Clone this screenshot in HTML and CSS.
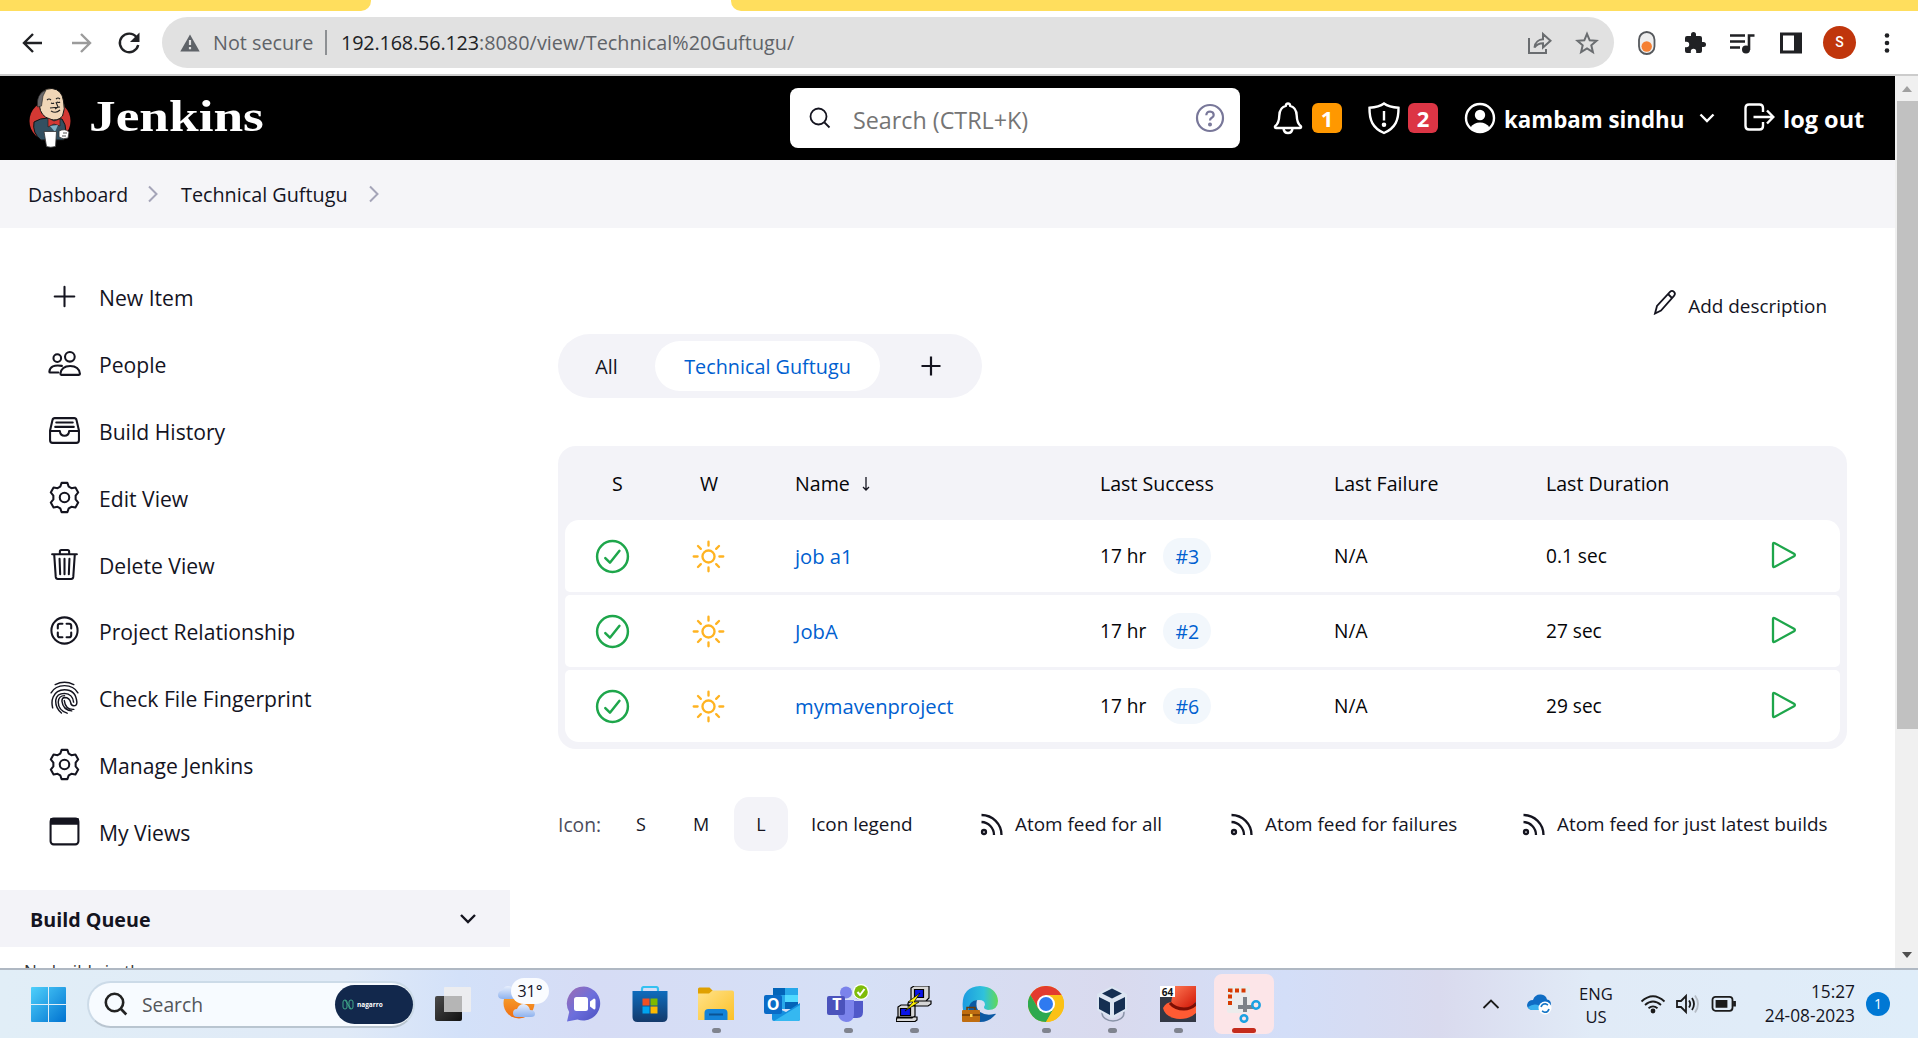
FILE: index.html
```html
<!DOCTYPE html>
<html lang="en">
<head>
<meta charset="utf-8">
<title>Technical Guftugu [Jenkins]</title>
<link rel="stylesheet" href="styles.css">
</head>
<body>
<svg width="0" height="0" class="defs">
  <defs>
    <linearGradient id="win" x1="0" y1="0" x2="1" y2="1"><stop offset="0" stop-color="#4fd0fb"/><stop offset="1" stop-color="#0072d0"/></linearGradient>
    <linearGradient id="chat" x1="0" y1="0" x2="1" y2="1"><stop offset="0" stop-color="#a06cb0"/><stop offset=".5" stop-color="#6c6fdc"/><stop offset="1" stop-color="#4b50c0"/></linearGradient>
    <linearGradient id="store" x1="0" y1="0" x2="0" y2="1"><stop offset="0" stop-color="#0f6cbd"/><stop offset="1" stop-color="#143a6b"/></linearGradient>
    <linearGradient id="folder" x1="0" y1="0" x2="1" y2="1"><stop offset="0" stop-color="#ffe28a"/><stop offset="1" stop-color="#fcc127"/></linearGradient>
    <linearGradient id="sunny" x1="0" y1="0" x2="0" y2="1"><stop offset="0" stop-color="#fbb233"/><stop offset="1" stop-color="#ee6c12"/></linearGradient>
    <linearGradient id="cloud" x1="0" y1="0" x2="0" y2="1"><stop offset="0" stop-color="#e8effc"/><stop offset="1" stop-color="#8eb2ee"/></linearGradient>
    <linearGradient id="edgeTop" x1="0" y1="0" x2="1" y2="0"><stop offset="0" stop-color="#1c9be0"/><stop offset=".6" stop-color="#2fc2dc"/><stop offset="1" stop-color="#62d957"/></linearGradient>
    <linearGradient id="dark" x1="0" y1="0" x2="1" y2="1"><stop offset="0" stop-color="#4a4a4a"/><stop offset="1" stop-color="#111"/></linearGradient>
    <linearGradient id="hat" x1="0" y1="0" x2="1" y2="1"><stop offset="0" stop-color="#ff7a55"/><stop offset="1" stop-color="#d01505"/></linearGradient>
    <symbol id="gear" viewBox="0 0 32 32"><path d="M13.2 1.8h5.6l1.3 3.7 2.6 1.5 3.9-.7 2.7 4.8-2.5 3v3.8l2.5 3-2.7 4.8-3.9-.7-2.6 1.5-1.3 3.7h-5.6l-1.3-3.7L9.300 25l-3.900.7-2.700-4.800 2.500-3v-3.800l-2.500-3 2.700-4.800 3.900.7 2.600-1.500z"/><circle cx="16" cy="16" r="4.600"/></symbol>
    <symbol id="rss" viewBox="0 0 24 24"><circle cx="4" cy="19.500" r="2"/><path d="M1.500 9.500a13 13 0 0 1 12.500 13M1.500 2.500a20 20 0 0 1 20 20"/></symbol>
    <symbol id="ok" viewBox="0 0 36 36"><circle cx="18" cy="18" r="15"/><path d="M11 19.500l4.500 4.500L24.800 12.500"/></symbol>
    <symbol id="sun" viewBox="0 0 36 36"><circle cx="18" cy="18" r="6.200"/><path d="M18 2.800v4M18 29.200v4M2.800 18h4M29.200 18h4M7.200 7.200l2.900 2.900M25.900 25.900l2.900 2.900M7.200 28.800l2.900-2.900M25.900 10.100l2.900-2.900"/></symbol>
    <symbol id="play" viewBox="0 0 28 30"><path d="M3 4.200v21.600q0 2 1.800 1L24 16.300q1.800-1.300 0-2.600L4.800 3.200Q3 2.200 3 4.200z"/></symbol>
  </defs>
</svg>

<div class="tabstrip"><div class="tab-left"></div><div class="tab-right"></div></div>

<div class="toolbar">
  <div class="nav">
    <svg width="24" height="24" viewBox="0 0 24 24"><path d="M21 12H3.500M12 3L3 12l9 9"/></svg>
    <svg class="off" width="24" height="24" viewBox="0 0 24 24"><path d="M3 12h17.500M12 3l9 9-9 9"/></svg>
    <svg width="24" height="24" viewBox="0 0 24 24"><path d="M19.500 6.200A9.300 9.300 0 1 0 21.200 14"/><path class="fill" d="M22.500 1.500v9.500H13z"/></svg>
  </div>
  <div class="omnibox">
    <svg width="20" height="18" viewBox="0 0 20 18"><path d="M10 0.500L19.700 17.500H.3z" fill="#5f6368"/><path d="M10 6v5M10 13v2.200" stroke="#e1e1e1" stroke-width="2.200"/></svg>
    <span class="notsecure">Not secure</span><i class="sep"></i>
    <span class="url"><b>192.168.56.123</b>:8080/view/Technical%20Guftugu/</span>
    <span class="omni-icons">
      <svg width="26" height="24" viewBox="0 0 26 24"><path d="M2 7v15h17v-4M7.500 16.500C8 11 12 8.500 16 8.300V3l7.500 6.700L16 16.500v-4.300c-4 0-6.500 1.300-8.500 4.300z"/></svg>
      <svg width="24" height="24" viewBox="0 0 24 24"><path d="M12 2.800l2.700 6.500 6.800.5-5.200 4.500 1.600 6.800-5.900-3.700-5.900 3.700 1.600-6.800-5.200-4.500 6.800-.5z"/></svg>
    </span>
  </div>
  <div class="extensions">
    <svg width="20" height="26" viewBox="0 0 20 26"><rect x="2" y="2" width="15.500" height="22" rx="7.700" fill="#eee" stroke="#55585c" stroke-width="1.800"/><circle cx="9.700" cy="16.500" r="5.200" fill="#f58033"/></svg>
    <svg width="24" height="24" viewBox="0 0 24 24"><path fill="#202124" d="M20.500 11H19V7a2 2 0 0 0-2-2h-4V3.500a2.500 2.500 0 0 0-5 0V5H4a2 2 0 0 0-2 2v3.800h1.500a2.700 2.700 0 0 1 0 5.400H2V20a2 2 0 0 0 2 2h3.800v-1.500a2.700 2.700 0 0 1 5.400 0V22H17a2 2 0 0 0 2-2v-4h1.500a2.500 2.500 0 0 0 0-5z"/></svg>
    <svg width="26" height="24" viewBox="0 0 26 24"><path fill="none" stroke="#202124" stroke-width="2.600" d="M1 4.500h15M1 10.500h15M1 16.500h10M20 19V4.500h5.500"/><circle cx="17" cy="18.500" r="4" fill="#202124"/></svg>
    <svg width="24" height="24" viewBox="0 0 24 24"><path fill="#202124" fill-rule="evenodd" d="M1 1.500h22v21H1zM4 4.500v15h11v-15z"/></svg>
    <span class="avatar">S</span>
    <svg width="6" height="24" viewBox="0 0 6 24"><g fill="#202124"><circle cx="3" cy="4.500" r="2.300"/><circle cx="3" cy="12" r="2.300"/><circle cx="3" cy="19.500" r="2.300"/></g></svg>
  </div>
</div>

<div class="viewport">
<div class="page">
  <header class="header">
    <svg class="butler" width="44" height="62" viewBox="0 0 44 62">
      <ellipse cx="22" cy="34" rx="20.500" ry="20" fill="#d33833"/>
      <path d="M6 35q6-4 14-4l14 1q4 5 4 13l-2 8H13Q4 46 6 35z" fill="#335061" stroke="#111" stroke-width="1"/>
      <path d="M10 15Q12 1 24 1.500q10 1 11.500 12.500 2 8-1 15-5 6-13 3-9-3-10-13z" fill="#f0d6b7" stroke="#111" stroke-width="1"/>
      <path d="M9.500 20Q8 7 18 3l-3 6-1.500 10z" fill="#6d6b6d" stroke="#222" stroke-width=".6"/>
      <path d="M19 13q2-2 4 0M28 12q2-2 4 0M23 16q2 1 3 0M29 15q2 1 3 0M28 15l2 5-3 2M23 24q5 3 9-1M22 21l10-1" fill="none" stroke="#222" stroke-width="1.100"/>
      <path d="M20 31l6 3 6-2v7l-6-2-6 3z" fill="#d33833" stroke="#222" stroke-width=".7"/>
      <path d="M22 39l8-1-3 7z" fill="#81b0c4"/>
      <path d="M16 44.500h12.500l-1 15q-5 1.500-9 0z" fill="#fff" stroke="#333" stroke-width=".8"/>
      <path d="M31 44q6-3 10 1l-1 6q-5 2-9-1z" fill="#fff" stroke="#333" stroke-width=".8"/><path d="M35 46h4M34 49h4" stroke="#555"/>
    </svg>
    <span class="wordmark">Jenkins</span>
    <div class="search">
      <svg width="24" height="24" viewBox="0 0 24 24"><circle cx="10.500" cy="10.500" r="8"/><path d="M16.500 16.500l5 5"/></svg>
      <span>Search (CTRL+K)</span>
      <svg class="help" width="30" height="30" viewBox="0 0 30 30"><circle cx="15" cy="15" r="13"/><path d="M11.300 12.200q.2-3.700 3.800-3.700 3.600.2 3.600 3.400 0 1.800-1.900 2.800-1.800.9-1.800 2.900"/><circle cx="15" cy="21.500" r=".9"/></svg>
    </div>
    <div class="account">
      <svg width="30" height="34" viewBox="0 0 30 34"><path d="M15 2.500c1.500 0 2 1 2.200 2.300 4.500 1.200 6.300 4.700 6.500 9.700.2 6 1.300 8.500 4 10.500.8 1 .3 2-1 2H3.300c-1.300 0-1.800-1-1-2 2.700-2 3.800-4.500 4-10.500.2-5 2-8.500 6.500-9.700C13 3.500 13.500 2.500 15 2.500zM10.500 27.500q.5 4.500 4.500 4.500t4.500-4.500"/></svg>
      <b class="badge orange">1</b>
      <svg class="shield" width="34" height="34" viewBox="0 0 34 34"><path d="M17 2.500C13 5.500 7 6.500 2.500 6.800 2.300 19 5.500 27 17 32 28.500 27 31.700 19 31.500 6.800 27 6.500 21 5.500 17 2.500zM17 10v9.500"/><circle cx="17" cy="23.700" r="1.100"/></svg>
      <b class="badge red">2</b>
      <svg class="user" width="32" height="32" viewBox="0 0 32 32"><circle cx="16" cy="16" r="14"/><g fill="#fff" stroke="none"><circle cx="16" cy="13" r="5.200"/><path d="M6.500 25.500Q10 20.500 16 20.500t9.500 5Q21.500 30 16 30T6.500 25.500z"/></g></svg>
      <span class="who">kambam sindhu</span>
      <svg class="chev" width="16" height="12" viewBox="0 0 16 12"><path d="M1.500 2.500L8 9l6.500-6.500"/></svg>
      <svg class="exit" width="32" height="30" viewBox="0 0 32 30"><path d="M20 10V6q0-3.500-3.500-3.500H6Q2.500 2.500 2.500 6v18q0 3.500 3.500 3.500h10.500q3.500 0 3.500-3.500v-4M10.500 15H30M24 8.500l6.300 6.500-6.300 6.500"/></svg>
      <span class="out">log out</span>
    </div>
  </header>

  <nav class="crumbs">
    <span class="c1">Dashboard</span>
    <svg width="12" height="18" viewBox="0 0 12 18"><path d="M2 1.500L9.500 9 2 16.500"/></svg>
    <span class="c2">Technical Guftugu</span>
    <svg width="12" height="18" viewBox="0 0 12 18"><path d="M2 1.500L9.500 9 2 16.500"/></svg>
  </nav>

  <div class="columns">
    <aside class="side">
      <ul class="tasks">
        <li><svg viewBox="0 0 32 32"><path d="M16 6.500v19M6.500 16h19"/></svg><span>New Item</span></li>
        <li><svg viewBox="0 0 32 32"><circle cx="21.200" cy="9.500" r="4.700"/><path d="M12 26q1-7.500 9.500-7.500t9.500 7.500q0 1-1 1H13q-1 0-1-1zM13.500 18.300Q2 16.500 1.300 24q0 .8.800.8H10"/><circle cx="9" cy="10.800" r="3.700"/></svg><span>People</span></li>
        <li><svg viewBox="0 0 32 32"><path d="M6.500 4h19q1.700 0 2.200 2L30 16v9.500Q30 28 27.500 28h-23Q2 28 2 25.500V16L4.300 6q.5-2 2.200-2zM2 16.500h9.500q.5 4.500 4.500 4.500t4.500-4.500H30M8 8.300h16M7 12.500h18"/></svg><span>Build History</span></li>
        <li><svg><use href="#gear"/></svg><span>Edit View</span></li>
        <li><svg viewBox="0 0 32 32"><path d="M4 6h24M6 6l1.500 22q.2 2 2 2h13q1.800 0 2-2L26 6M11.500 6V3.500Q11.500 2 13 2h6q1.500 0 1.500 1.500V6M11.200 10.500l.6 15M16 10.500v15M20.800 10.500l-.6 15"/></svg><span>Delete View</span></li>
        <li><svg viewBox="0 0 32 32"><circle cx="16" cy="16" r="12.700"/><path d="M9.500 14v-2.500q0-2 2-2H14M18 9.500h2.500q2 0 2 2V14M22.500 18v2.500q0 2-2 2H18M14 22.500h-2.500q-2 0-2-2V18"/></svg><span>Project Relationship</span></li>
        <li><svg class="thin" viewBox="0 0 32 32"><path d="M7 3.500Q16-1 25 3.500M3 11.500q4-7 13-7t13 7M4.500 26Q3 20 5 15.500 8 8.500 16 8.500q11 0 12 12 0 3.500-3 3.500-2.700 0-3-3-1-5-6-5-2.500.2-2.500 3.500 1 8.500 9.500 9.500M18.500 31.200Q9.500 28 10 20q.5-5.800 6-5.800M13 31q-6-5-5.500-12.500Q8.500 12 16 12q8 .5 8.800 8.500M25 27.500q-8 .5-9.200-8.500"/></svg><span>Check File Fingerprint</span></li>
        <li><svg><use href="#gear"/></svg><span>Manage Jenkins</span></li>
        <li><svg viewBox="0 0 32 32"><rect x="2.500" y="3.500" width="27" height="25" rx="3"/><path d="M3 4h26v4.500H3z" fill="#14141f"/></svg><span>My Views</span></li>
      </ul>
      <div class="queue"><span>Build Queue</span><svg width="18" height="12" viewBox="0 0 18 12"><path d="M2 2l7 7 7-7"/></svg></div>
      <p class="empty">No builds in the queue.</p>
    </aside>

    <main class="main">
      <div class="describe"><svg width="24" height="26" viewBox="0 0 24 26"><path d="M2 24.500l2-7.500L17 2.800q2-1.800 4 0 1.800 2 0 4L8 21.500zM15 5l4 4"/></svg><span>Add description</span></div>
      <div class="views"><span class="all">All</span><span class="current">Technical Guftugu</span><svg width="20" height="20" viewBox="0 0 20 20"><path d="M10 .5v19M.5 10h19"/></svg></div>

      <section class="jobs">
        <div class="row head"><span class="s">S</span><span class="w">W</span><span>Name <svg width="10" height="16" viewBox="0 0 10 16"><path d="M5 1v13M2 11l3 3 3-3"/></svg></span><span>Last Success</span><span>Last Failure</span><span>Last Duration</span><span></span></div>
        <div class="row"><svg class="ok"><use href="#ok"/></svg><svg class="sun"><use href="#sun"/></svg><a>job a1</a><span class="when">17 hr <a class="build">#3</a></span><span>N/A</span><span>0.1 sec</span><svg class="play"><use href="#play"/></svg></div>
        <div class="row"><svg class="ok"><use href="#ok"/></svg><svg class="sun"><use href="#sun"/></svg><a>JobA</a><span class="when">17 hr <a class="build">#2</a></span><span>N/A</span><span>27 sec</span><svg class="play"><use href="#play"/></svg></div>
        <div class="row"><svg class="ok"><use href="#ok"/></svg><svg class="sun"><use href="#sun"/></svg><a>mymavenproject</a><span class="when">17 hr <a class="build">#6</a></span><span>N/A</span><span>29 sec</span><svg class="play"><use href="#play"/></svg></div>
      </section>

      <footer class="foot">
        <span class="lbl">Icon:</span><span class="sz">S</span><span class="sz">M</span><span class="sz on">L</span><span class="legend">Icon legend</span>
        <span class="feed f1"><svg><use href="#rss"/></svg>Atom feed for all</span>
        <span class="feed f2"><svg><use href="#rss"/></svg>Atom feed for failures</span>
        <span class="feed"><svg><use href="#rss"/></svg>Atom feed for just latest builds</span>
      </footer>
    </main>
  </div>
</div>
<div class="scrollbar"><i class="up"></i><div class="thumb"></div><i class="down"></i></div>
</div>

<div class="taskbar">
  <svg class="start" width="35" height="35" viewBox="0 0 35 35"><path fill="url(#win)" d="M1 0h16v17H0V1q0-1 1-1zM18 0h16q1 0 1 1v16H18zM0 18h17v17H1q-1 0-1-1zM18 18h17v16q0 1-1 1H18z"/></svg>
  <div class="tsearch">
    <svg width="24" height="24" viewBox="0 0 24 24"><circle cx="10.500" cy="10.500" r="8.700"/><path d="M16.500 16.500l5.800 6"/></svg>
    <span>Search</span>
    <div class="promo"><svg width="12" height="11" viewBox="0 0 12 11"><path d="M1 8V3q0-2 2-2t2 2v5q0 2-2 2T1 8zM7 8V3q0-2 2-2t2 2v5q0 2-2 2T7 8zM3 1l6 9"/></svg>nagarro</div>
  </div>
  <div class="apps">
    <div class="app"><svg width="38" height="38" viewBox="0 0 38 38"><rect x="2" y="11" width="27" height="25" rx="2" fill="url(#dark)"/><rect x="11" y="2" width="27" height="25" rx="1" fill="#eee" opacity=".9"/><rect x="11" y="11" width="18" height="16" fill="#b5b5b5"/></svg></div>
    <div class="app weather"><svg width="44" height="40" viewBox="0 0 44 40"><circle cx="21" cy="21" r="15.500" fill="url(#sunny)"/><path d="M5 17q-5 0-5-4t5-5q1-4 5-4t6 5q4 0 4 4 0 5-4 4z" fill="url(#cloud)"/><path d="M19 35q-4 0-4-4t4-4q2-5 7-5 5 1 6 6 5 0 5 4 0 3-4 3z" fill="url(#cloud)"/></svg><span>31°</span></div>
    <div class="app"><svg width="36" height="36" viewBox="0 0 36 36"><path d="M18 0.500a17 17 0 1 1-6.500 33L1 35.500 3.200 26A17 17 0 0 1 18 .5z" fill="url(#chat)"/><rect x="8" y="11" width="14" height="14" rx="2.500" fill="#fff"/><path d="M24 15.500l4-3q1.500 0 1.500 1.500v8q0 1.500-1.500 1.500l-4-3z" fill="#fff"/></svg></div>
    <div class="app"><svg width="36" height="36" viewBox="0 0 36 36"><path d="M10 6V3q0-2 2-2h12q2 0 2 2v3" fill="none" stroke="#35c1f1" stroke-width="2.200"/><path d="M.5 5h35v26q0 5-5 5h-25q-5 0-5-5z" fill="url(#store)"/><path fill="#f25022" d="M10.500 12.500h7v7h-7z"/><path fill="#7fba00" d="M18.500 12.500h7v7h-7z"/><path fill="#00a4ef" d="M10.500 20.500h7v7h-7z"/><path fill="#ffb900" d="M18.500 20.500h7v7h-7z"/></svg></div>
    <div class="app run"><svg width="36" height="34" viewBox="0 0 36 34"><path d="M0 2q0-1.500 1.500-1.500h10L15 4l-3 3H0z" fill="#dfa000"/><path d="M0 6.500h11l3.500-3H34q2 0 2 2V33H0z" fill="url(#folder)"/><path d="M6.500 33v-7q0-4 4-4h15q4 0 4 4v7z" fill="#1483d8"/><path d="M11 27.500h14" stroke="#0b5394" stroke-width="2"/></svg></div>
    <div class="app"><svg width="36" height="34" viewBox="0 0 36 34"><path fill="#28a8ea" d="M9 1h25v21H9z"/><path fill="#50d9ff" d="M21 8h13v7H21z"/><path fill="#0364b8" d="M9 1h12v7H9zM21 15h13v7H21z"/><path fill="#1490df" d="M8 19l14 6 14-9v16q0 2-2 2H10q-2 0-2-2z"/><path fill="#35b8f1" d="M10 34l26-16v14q0 2-2 2z"/><rect y="8" width="18" height="19" rx="2" fill="#0a6bc7"/></svg><b class="letter">O</b></div>
    <div class="app run"><svg width="44" height="40" viewBox="0 0 44 40"><circle cx="20" cy="8.500" r="6" fill="#7b83eb"/><circle cx="33" cy="11" r="4.500" fill="#5059c9"/><path fill="#5059c9" d="M26 17h11v11q0 6-6 6h-5z"/><path fill="#7b83eb" d="M12 16h16v13q0 9-8 9-8-1-8-9z"/><rect x="1" y="12" width="18" height="19" rx="2" fill="#4b53bc"/><circle cx="35" cy="8" r="8" fill="#fff"/><circle cx="35" cy="8" r="6.800" fill="#7ebc0a"/><path d="M31.500 8l2.500 3 4.500-6" fill="none" stroke="#fff" stroke-width="2"/></svg><b class="letter">T</b></div>
    <div class="app run"><svg width="36" height="36" viewBox="0 0 36 36"><g stroke="#000" stroke-width="1.200" fill="#d6d6d6"><path d="M15 2l3-2h15v12l-3 3H15zM15 15h20v3l-3 2H12v-3zM2 21l3-2h14v11l-3 2H2zM1 31h20v3l-2 1.500H0z"/><path fill="#0a14e8" d="M18.500 3.500h9v8h-9zM4.500 22.500h10v7h-10z"/><path fill="#fff200" d="M24 7L12 16h5l-8 9 14-9h-5z" stroke-width=".7"/></g></svg></div>
    <div class="app"><svg width="36" height="36" viewBox="0 0 36 36"><path d="M1 24Q-2 1 18 0q17 1 18 15 0 9-10 9-6-1-3-5 0-5-6-5Q8 14 8 30 3 28 1 24z" fill="url(#edgeTop)"/><path d="M7 28Q5 15 15 14q-2 8 3 12 6 4 14 2 3-1 1 1-6 7-15 7Q9 35 7 28z" fill="#0c59a4"/><rect y="24" width="18" height="12" rx="1" fill="#c06d10"/><path d="M5 24v-2.500h8V24M0 29h18" fill="none" stroke="#6e3a06" stroke-width="1.500"/><rect x="8" y="28" width="2.500" height="3" fill="#ffd24a"/></svg></div>
    <div class="app run"><svg width="36" height="36" viewBox="0 0 36 36"><circle cx="18" cy="18" r="18" fill="#fbc116"/><path d="M2.400 9A18 18 0 0 1 33.600 9H18L10.200 22.500z" fill="#e33b2e"/><path d="M2.400 9A18 18 0 0 0 18 36l7.800-13.500H10.200z" fill="#2da94f"/><path d="M18 9h15.600A18 18 0 0 1 18 36l7.800-13.500z" fill="#fbc116"/><circle cx="18" cy="18" r="9" fill="#fff"/><circle cx="18" cy="18" r="7" fill="#2f7af0"/></svg></div>
    <div class="app run"><svg width="32" height="36" viewBox="0 0 32 36"><ellipse cx="17" cy="27" rx="11" ry="8" fill="none" stroke="#8a94a8" stroke-width="1.500"/><path fill="#dce5f2" d="M1 8L16 0l15 8v16L16 33 1 24z"/><path fill="#152f52" d="M6 7.500L16 2.500l10 5-10 5zM3 11l11 5.500V29L3 23zM29 11l-11 5.500V29l11-6z"/></svg></div>
    <div class="app run"><svg width="36" height="36" viewBox="0 0 36 36"><path fill="#333845" d="M0 0h36v36H0z"/><path fill="url(#hat)" d="M14 0h22v16q-5 6-12 6-9 0-13-5z"/><path fill="#ff5b33" d="M3 22q3-6 9-6 4 6 12 6 7 0 12-4v9q-6 6-16 6Q5 32 3 22z"/><path d="M10 17q5 6 14 6 7 0 12-5" fill="none" stroke="#7d0e04" stroke-width="3"/><path fill="#fff" d="M0 0h15v11H0z"/></svg><b class="letter bit">64</b></div>
    <div class="app snip"><svg width="36" height="38" viewBox="0 0 36 38"><rect x="1" y="1" width="23" height="27" rx="2" fill="#ececec"/><path d="M4 20V5.500h16" fill="none" stroke="#d83b01" stroke-width="4" stroke-dasharray="4 2.500"/><path d="M19 12v15M12 22h15" stroke="#7d8288" stroke-width="4"/><circle cx="30" cy="20" r="3.700" fill="none" stroke="#1ba1e2" stroke-width="2.500"/><circle cx="18" cy="33.500" r="3.300" fill="none" stroke="#1ba1e2" stroke-width="2.500"/></svg></div>
  </div>
  <div class="tray">
    <svg class="caret" width="18" height="12" viewBox="0 0 18 12"><path d="M1.500 10L9 2.500 16.500 10"/></svg>
    <svg class="drive" width="26" height="22" viewBox="0 0 26 22"><path d="M5 17q-5-1-5-5 1-5 6-5 2-6 8-5.500 5 .5 6 5 4 .5 4 5t-5 5.500z" fill="#0f6cc4"/><path d="M1 14q8-6 16 2v1H5q-3 0-4-3z" fill="#38b0ee"/><circle cx="18" cy="15" r="6.500" fill="#fff"/><path d="M14 14q1-3.500 4.500-3.300l2.500 1.300M22 16q-1 3.500-4.500 3.300L15 18" fill="none" stroke="#1878c8" stroke-width="1.600"/></svg>
    <div class="lang">ENG<br>US</div>
    <svg class="wifi" width="26" height="20" viewBox="0 0 26 20"><path d="M1.500 7.500q11.500-10.500 23 0M5 11q8-7 16 0M8.500 14.300q4.500-3.800 9 0"/><circle cx="13" cy="17" r="1.500" fill="#1b1b1b"/></svg>
    <svg class="vol" width="26" height="22" viewBox="0 0 26 22"><path d="M2 8h4l5-5v16l-5-5H2zM14 7.500q2.500 3.500 0 7M17 5q4 6 0 12"/><path d="M20 2.500q6 8.500 0 17" stroke="#b5bcc5"/></svg>
    <svg class="bat" width="26" height="18" viewBox="0 0 26 18"><rect x="1.500" y="1.800" width="20" height="14" rx="3"/><path d="M5.500 6h10v5.800h-10zM23 7h1v3.500h-1z" fill="#1b1b1b"/></svg>
    <div class="clock">15:27<br>24-08-2023</div>
    <span class="count">1</span>
  </div>
</div>
</body>
</html>
```
FILE: styles.css
```css
* { box-sizing: border-box; }
body {
  margin: 0; width: 1918px; height: 1038px; overflow: hidden;
  display: flex; flex-direction: column; background: #fff;
  font-family: "Open Sans", "Noto Sans", sans-serif; color: #14141f;
}
svg { display: block; flex: none; fill: none; }
.defs { position: absolute; }

/* browser chrome */
.tabstrip { height: 11px; display: flex; justify-content: space-between; }
.tab-left { width: 371px; background: #ffde5d; border-bottom-right-radius: 10px; }
.tab-right { width: 1187px; background: #ffde5d; border-bottom-left-radius: 10px; }
.toolbar { height: 65px; border-bottom: 2px solid #ccc; display: flex; align-items: center; }
.nav { display: flex; gap: 24px; padding-left: 21px; width: 162px; stroke: #202124; stroke-width: 2.4; }
.nav .off { stroke: #9b9b9b; }
.nav .fill { fill: #202124; stroke: none; }
.omnibox { width: 1452px; height: 51px; border-radius: 26px; background: #e1e1e1; display: flex; align-items: center; padding-left: 18px; font-size: 19.8px; color: #5f6368; }
.notsecure { margin-left: 13px; width: 112px; white-space: nowrap; }
.sep { width: 2px; height: 25px; background: #8d9093; margin-right: 14px; }
.url b { font-weight: 400; color: #202124; letter-spacing: -.15px; }
.url { letter-spacing: .05px; }
.omni-icons { margin-left: auto; display: flex; gap: 22px; padding-right: 15px; stroke: #6a6d70; stroke-width: 2; }
.extensions { display: flex; align-items: center; padding-left: 23px; }
.extensions svg:nth-child(2) { margin-left: 26px; }
.extensions svg:nth-child(3) { margin-left: 22px; }
.extensions svg:nth-child(4) { margin-left: 24px; }
.avatar { width: 33px; height: 33px; border-radius: 50%; background: #c0360c; color: #fff; font: 500 14px/33px Roboto, sans-serif; text-align: center; margin: 0 25px 0 20px; }
.extensions svg:last-child { margin-left: 3px; }

.viewport { height: 892px; display: flex; }
.page { width: 1895px; height: 892px; overflow: hidden; }

/* header */
.header { height: 84px; background: #000; color: #fff; display: flex; align-items: center; padding-left: 28px; }
.wordmark { font: 700 45px/60px "Liberation Serif", serif; margin: -5px 0 0 17px; width: 701px; transform: scaleX(1.185); transform-origin: left; }
.search { width: 450px; height: 60px; border-radius: 8px; background: #fff; display: flex; align-items: center; padding: 0 15px 0 18px; stroke: #14141f; stroke-width: 1.8; }
.search span { font-size: 23.3px; color: #757575; margin: 3px auto 0 21px; }
.search .help { stroke: #787799; stroke-width: 2.2; }
.account { display: flex; align-items: center; stroke: #fff; stroke-width: 2.4; padding-left: 33px; }
.badge { width: 30px; height: 30px; border-radius: 6px; font-size: 22px; line-height: 31px; text-align: center; margin-left: 9px; }
.orange { background: #ff9800; }
.red { background: #dc3545; margin-left: 7px; }
.shield { margin-left: 25px; }
.user { margin-left: 26px; }
.who { font-size: 22.3px; font-weight: 700; margin: 2px 0 0 8px; width: 180px; white-space: nowrap; }
.chev { margin-left: 15px; margin-top: -1px; }
.exit { margin-left: 28px; margin-top: -2px; }
.out { font-size: 23.5px; font-weight: 700; margin: 2px 0 0 8px; white-space: nowrap; }

.crumbs { height: 68px; background: #f5f5f8; display: flex; align-items: center; padding-left: 28px; font-size: 19.4px; stroke: #a5a5b8; stroke-width: 2; }
.crumbs svg { margin-left: 20px; }
.c1 { width: 99px; }
.c2 { width: 167px; margin-left: 22px; font-size: 19.8px; white-space: nowrap; }

/* sidebar */
.columns { display: flex; }
.side { width: 510px; }
.tasks { list-style: none; margin: 35px 0 0; padding: 0; }
.tasks li { height: 66.9px; display: flex; align-items: center; padding-left: 48px; font-size: 21.15px; }
.tasks svg { width: 33px; height: 33px; stroke: #14141f; stroke-width: 2; stroke-linecap: round; stroke-linejoin: round; }
.tasks .thin { stroke-width: 1.4; }
.tasks span { margin: 2px 0 0 18px; }
.queue { height: 57px; margin-top: 25px; background: #f3f3f8; display: flex; align-items: center; justify-content: space-between; padding: 0 33px 0 30px; font-size: 19.7px; font-weight: 700; stroke: #14141f; stroke-width: 2.4; }
.queue span { margin-top: 2px; }
.empty { margin: 12px 0 0 24px; font-size: 17px; line-height: 24px; color: #333; letter-spacing: .1px; }

/* main */
.main { width: 1289px; margin-left: 48px; }
.describe { display: flex; justify-content: flex-end; align-items: center; height: 30px; margin: 63px 20px 0 0; font-size: 18.9px; stroke: #14141f; stroke-width: 1.8; }
.describe svg { margin: -9px 11px 0 0; }
.views { width: 424px; height: 64px; margin-top: 13px; border-radius: 32px; background: #f3f3f8; display: flex; align-items: center; font-size: 19.8px; stroke: #14141f; stroke-width: 2.2; }
.all { width: 97px; text-align: center; }
.current { width: 225px; height: 50px; line-height: 51px; border-radius: 25px; background: #fff; color: #0060d0; text-align: center; }
.views svg { margin-left: 41px; }
.jobs { margin-top: 48px; width: 1289px; height: 303px; border-radius: 18px; background: #f3f3f8; padding: 0 7px; font-size: 19.1px; color: #050508; }
.row { display: grid; grid-template-columns: 96px 134px 305px 234px 212px 260px 34px; height: 72px; align-items: center; background: #fff; border-radius: 5px; margin-bottom: 3px; }
.row.head { background: none; height: 74px; margin: 0; font-size: 19.6px; }
.row:nth-child(2) { border-radius: 14px 14px 5px 5px; }
.row:last-child { border-radius: 5px 5px 14px 14px; }
.row a { color: #0060d0; font-size: 20.2px; }
.head .s { padding-left: 47px; }
.head .w { padding-left: 39px; }
.head svg { display: inline-block; stroke: #14141f; stroke-width: 1.3; margin-left: 6px; vertical-align: -1px; }
.ok { width: 37px; height: 37px; margin-left: 29px; stroke: #1ea64b; stroke-width: 2.4; stroke-linecap: round; stroke-linejoin: round; }
.sun { width: 35px; height: 35px; margin-left: 30px; stroke: #ffb321; stroke-width: 2.4; stroke-linecap: round; }
.when { display: flex; align-items: center; white-space: pre; }
.row .build { width: 48px; height: 36px; line-height: 37px; border-radius: 18px; background: #f2f7fc; text-align: center; margin-left: 12px; font-size: 19.5px; }
.play { width: 28px; height: 30px; margin: -3px 0 0 -36px; stroke: #1ea64b; stroke-width: 2.3; }

.foot { display: flex; align-items: center; height: 54px; margin-top: 48px; font-size: 18.92px; white-space: nowrap; }
.lbl { width: 56px; color: #4d4d5c; font-size: 19.3px; }
.sz { width: 54px; text-align: center; font-size: 18px; margin-right: 6px; }
.sz.on { height: 54px; line-height: 54px; border-radius: 15px; background: #f3f3f8; margin-right: 23px; }
.legend { width: 169px; }
.feed { display: flex; align-items: center; }
.feed svg { width: 24px; height: 25px; stroke: #14141f; stroke-width: 2.3; margin-right: 11px; }
.f1 { width: 250px; }
.f2 { width: 292px; }

.scrollbar { width: 23px; height: 892px; background: #f0f0f0; display: flex; flex-direction: column; align-items: center; padding: 10px 0; }
.scrollbar i { border: 5.5px solid transparent; }
.up { border-top: 0 !important; border-bottom: 6px solid #a0a0a0 !important; }
.thumb { width: 21px; height: 628px; margin: 9px 0 auto 2px; background: #c1c1c1; }
.down { border-bottom: 0 !important; border-top: 6px solid #505050 !important; }

/* taskbar */
.taskbar { height: 70px; border-top: 2px solid #afb8c3; display: flex; align-items: center; background: linear-gradient(90deg, #e1eef7 0, #e0eaf7 18%, #d3e1f9 24%, #d6dcf5 31%, #d6e0f6 45%, #d9daee 58%, #d3def8 67%, #d9daee 75%, #e1ebf7 83%, #dfedf9 100%); }
.start { margin-left: 31px; }
.tsearch { width: 328px; height: 47px; margin-left: 21px; border: 2px solid #ccdbe8; border-bottom-color: #b9c5d0; border-radius: 24px; background: #f7fbff; display: flex; align-items: center; stroke: #222; stroke-width: 2.6; padding-left: 15px; }
.tsearch span { margin-left: 14px; font-size: 19.3px; color: #53565a; }
.promo { width: 78px; height: 39px; border-radius: 20px; background: #12284c; margin-left: auto; display: flex; align-items: center; padding-left: 7px; gap: 3px; color: #fff; font-size: 6.5px; font-weight: 700; stroke: #3fa88a; stroke-width: 1; }
.apps { display: flex; margin-left: 4px; }
.app { width: 66px; height: 60px; display: flex; align-items: center; justify-content: center; position: relative; }
.weather svg { margin-left: 4px; margin-top: -4px; }
.weather span { position: absolute; left: 26px; top: 4px; width: 38px; height: 26px; line-height: 26px; border-radius: 13px; background: #fafcff; font-size: 16px; text-align: center; }
.run::after, .snip::after { content: ""; position: absolute; left: 29px; bottom: 1px; width: 9px; height: 5px; border-radius: 3px; background: #7f838e; }
.letter { position: absolute; left: 15px; top: 16px; width: 18px; text-align: center; font-size: 16px; line-height: 28px; color: #fff; }
.run .letter { left: 13px; }
.run .bit { left: 15px; top: 11px; width: 15px; font-size: 10px; line-height: 14px; color: #111; }
.snip { width: 60px; margin-left: 3px; border-radius: 8px; background: #fce5e8; }
.snip::after { left: 18px; width: 24px; background: #c42b1c; }
.tray { display: flex; align-items: center; margin-left: 208px; stroke: #1b1b1b; stroke-width: 1.8; }
.drive { margin-left: 27px; stroke: none; }
.lang { margin-left: 24px; width: 38px; text-align: center; font-size: 16.6px; line-height: 23px; padding-top: 1px; }
.wifi { margin-left: 25px; }
.vol { margin-left: 9px; }
.bat { margin-left: 10px; }
.clock { width: 100px; margin-left: 18px; text-align: right; font-size: 17.3px; line-height: 24px; white-space: nowrap; }
.count { width: 24px; height: 24px; margin-left: 11px; border-radius: 50%; background: #0078d4; color: #fff; font-size: 14px; line-height: 24px; text-align: center; }
```
